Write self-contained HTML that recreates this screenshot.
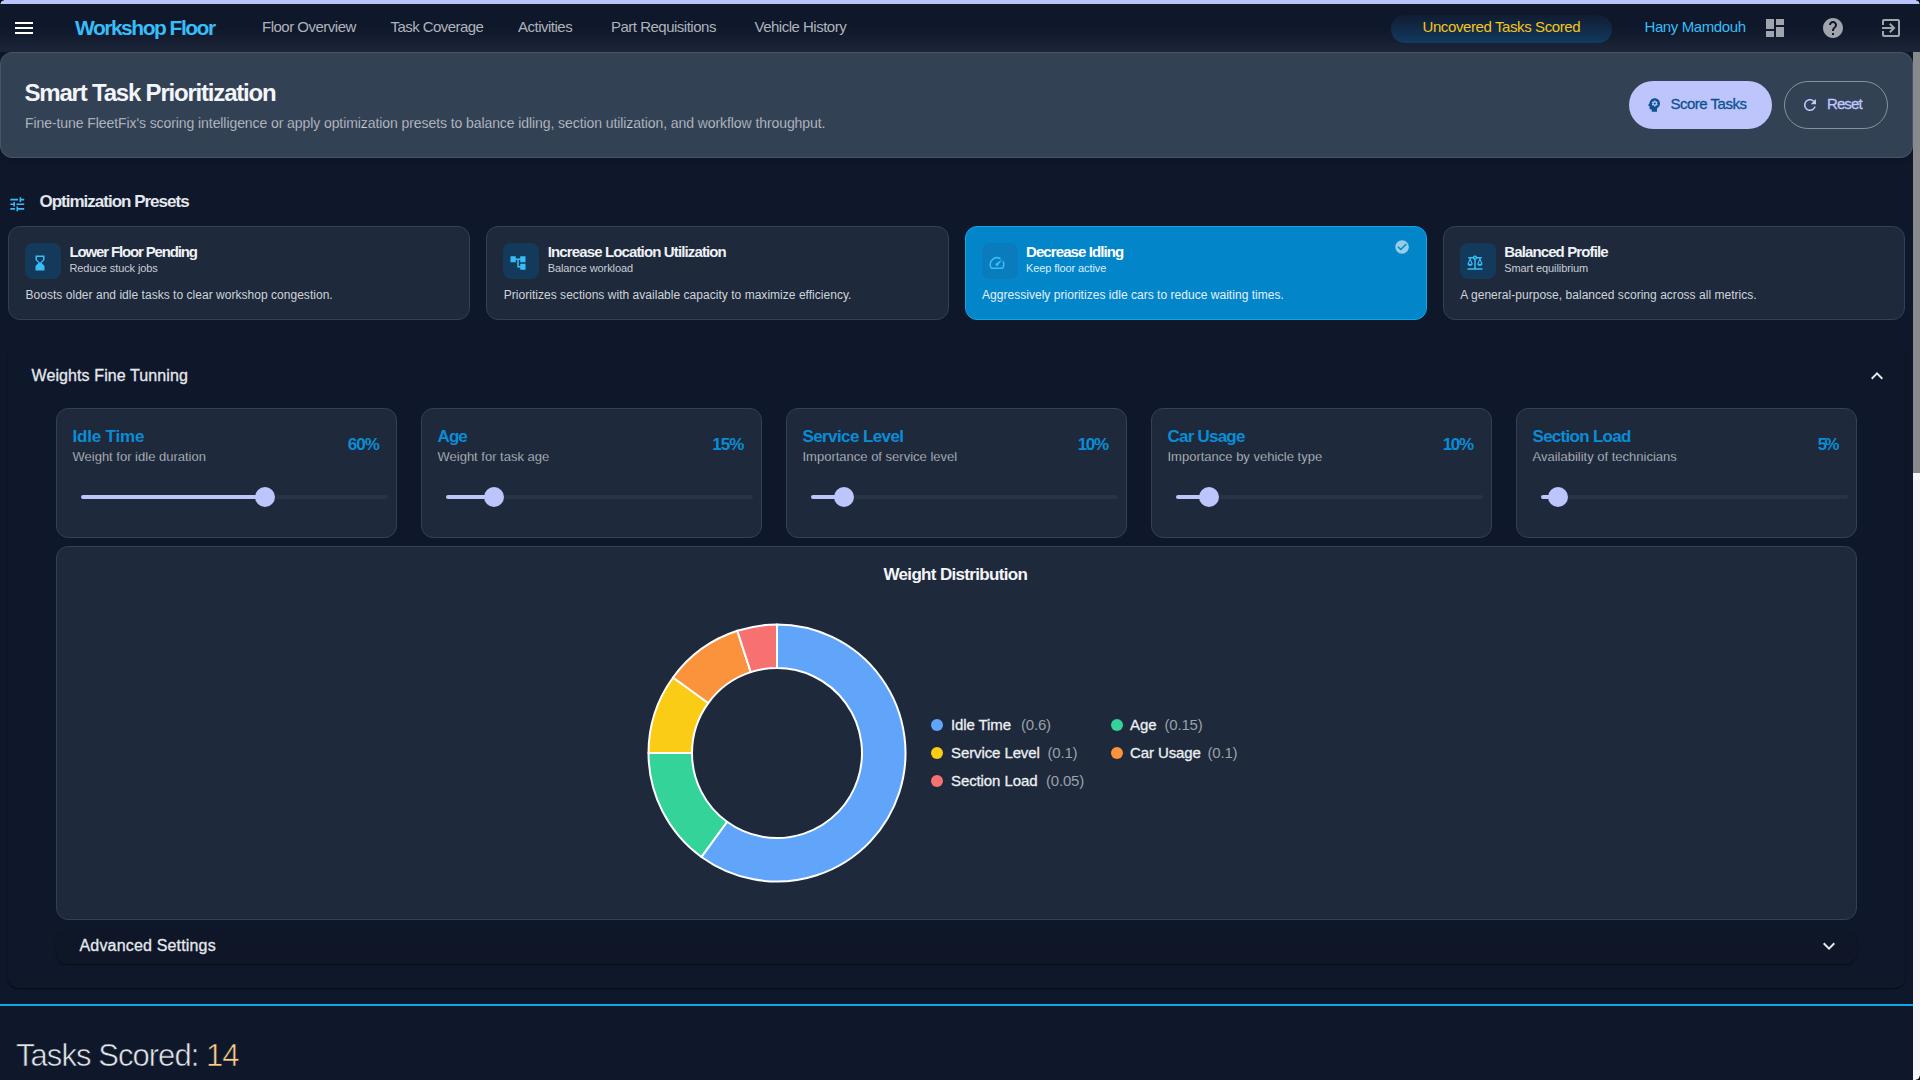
<!DOCTYPE html>
<html><head><meta charset="utf-8">
<style>
*{box-sizing:border-box;margin:0;padding:0}
html,body{width:1920px;height:1080px;overflow:hidden;background:#0f172a;font-family:"Liberation Sans",sans-serif}
.a{position:absolute}
.t{position:absolute;white-space:nowrap;line-height:1}
svg{display:block}
#topline{left:0;top:0;width:1920px;height:4px;background:#b9c3fc}
#nav{left:0;top:4px;width:1920px;height:48px;background:linear-gradient(180deg,#0f172a 0%,#0f172a 50%,#1c2638 100%)}
.navlink{font-size:15px;color:#aeb3bb;top:19px}
#pill{left:1391px;top:15px;width:221px;height:28px;border-radius:14px;background:linear-gradient(180deg,#111c31 0%,#123a60 100%)}
#sbtrack{left:1913px;top:52px;width:7px;height:1028px;background:#f6f6f8}
#sbthumb{left:1913px;top:52px;width:7px;height:421px;background:#88898d}
#header{left:0;top:52px;width:1913px;height:106px;border-radius:12px;background:#334155;border:1px solid #46556a;box-shadow:0 2px 4px rgba(0,0,0,0.18)}
.btn{border-radius:24px}
#prow{left:8px;top:226px;width:1897px;height:94px;display:flex;gap:16px}
.pcard{position:relative;flex:1 1 0;height:94px;border-radius:12px;background:#1e293b;border:1px solid #334155}
.pcard.act{background:#0385c9;border-color:#0ea5e9}
.ibox{left:16px;top:16px;width:36px;height:36px;border-radius:8px;background:#133a5a}
.act .ibox{background:#0a7bbd}
.ptitle{left:60.5px;font-size:15px;font-weight:bold;color:#eef1f5;top:17.3px;letter-spacing:-1.15px}
.psub{left:60.5px;font-size:11px;color:#c9ced6;top:36px;letter-spacing:-0.1px}
.pdesc{left:16.5px;font-size:12px;color:#cfd4db;top:61.6px;letter-spacing:0.03px}
.act .ptitle{color:#fff}
.act .psub{color:#dcefff}
.act .pdesc{color:#e3f2fd}
#wcont{left:8px;top:352px;width:1897px;height:636px;border-radius:6px 6px 10px 10px;background:#0f172a;box-shadow:0 2px 1px -1px rgba(0,0,0,0.3),0 1px 1px rgba(0,0,0,0.2),0 1px 3px rgba(0,0,0,0.18)}
.scard{top:408px;width:341px;height:130px;border-radius:12px;background:#1e293b;border:1px solid #334155}
.stitle{left:15.5px;top:18.6px;font-size:17px;font-weight:bold;color:#0a8dd6;letter-spacing:-0.2px}
.ssub{left:15.5px;top:41.2px;font-size:13px;color:#c8cdd4;-webkit-text-stroke:0.25px #1e293b}
.spct{right:16.5px;top:26.6px;font-size:17px;font-weight:bold;color:#0a8dd6;letter-spacing:-1px}
.rail{left:24px;top:86px;width:307px;height:4px;border-radius:2px;background:#283344}
.fill{left:24px;top:86px;height:4px;border-radius:2px;background:#bcc5fc}
.thumb{top:78px;width:20px;height:20px;border-radius:50%;background:#bcc5fc}
#wdist{left:56px;top:546px;width:1801px;height:374px;border-radius:12px;background:#1e293b;border:1px solid #334155}
.dot{width:12px;height:12px;border-radius:50%}
.lg{font-size:15px;color:#eceff3;letter-spacing:-0.1px;-webkit-text-stroke:0.3px #eceff3}
.lv{font-size:15px;color:#9aa1ab;letter-spacing:-0.2px}
#adv{left:56px;top:931px;width:1801px;height:33px;border-radius:12px;background:#0e1627;box-shadow:0 2px 1px -1px rgba(0,0,0,0.25),0 1px 1px rgba(0,0,0,0.14),0 1px 3px rgba(0,0,0,0.12)}
#blueline{left:0;top:1004px;width:1913px;height:2px;background:#0ea5e9}
</style></head>
<body>
<div id="topline" class="a"></div>
<div id="nav" class="a"></div>
<!-- menu icon -->
<svg class="a" style="left:12px;top:16px" width="24" height="24" viewBox="0 0 24 24"><path fill="#fff" d="M3 18h18v-2H3v2zm0-5h18v-2H3v2zm0-7v2h18V6H3z"/></svg>
<div class="t" style="left:75px;top:17px;font-size:21px;font-weight:bold;color:#38bdf8;letter-spacing:-1.5px">Workshop Floor</div>
<div class="t navlink" style="left:262px;letter-spacing:-0.5px">Floor Overview</div>
<div class="t navlink" style="left:390.5px;letter-spacing:-0.55px">Task Coverage</div>
<div class="t navlink" style="left:518px;letter-spacing:-0.5px">Activities</div>
<div class="t navlink" style="left:611px;letter-spacing:-0.5px">Part Requisitions</div>
<div class="t navlink" style="left:754.5px;letter-spacing:-0.5px">Vehicle History</div>
<div id="pill" class="a"></div>
<div class="t" style="left:1422.5px;top:19px;font-size:15px;color:#f5c518;letter-spacing:-0.4px">Uncovered Tasks Scored</div>
<div class="t" style="left:1644.5px;top:19px;font-size:15px;color:#38bdf8;letter-spacing:-0.4px">Hany Mamdouh</div>
<svg class="a" style="left:1763px;top:16px" width="24" height="24" viewBox="0 0 24 24"><path fill="#a0a4ac" d="M3 13h8V3H3v10zm0 8h8v-6H3v6zm10 0h8V11h-8v10zm0-18v6h8V3h-8z"/></svg>
<svg class="a" style="left:1821px;top:16px" width="24" height="24" viewBox="0 0 24 24"><path fill="#a0a4ac" d="M12 2C6.48 2 2 6.48 2 12s4.48 10 10 10 10-4.48 10-10S17.52 2 12 2zm1 17h-2v-2h2v2zm2.07-7.75-.9.92C13.45 12.9 13 13.5 13 15h-2v-.5c0-1.1.45-2.1 1.17-2.83l1.24-1.26c.37-.36.59-.86.59-1.41 0-1.1-.9-2-2-2s-2 .9-2 2H8c0-2.21 1.79-4 4-4s4 1.79 4 4c0 .88-.36 1.68-.93 2.25z"/></svg>
<svg class="a" style="left:1879px;top:16px" width="24" height="24" viewBox="0 0 24 24"><path fill="#a0a4ac" d="M10.09 15.59L11.5 17l5-5-5-5-1.41 1.41L12.67 11H3v2h9.67l-2.58 2.59zM19 3H5c-1.11 0-2 .9-2 2v4h2V5h14v14H5v-4H3v4c0 1.1.89 2 2 2h14c1.1 0 2-.9 2-2V5c0-1.1-.9-2-2-2z"/></svg>

<!-- header card -->
<div id="header" class="a"></div>
<div class="t" style="left:24.5px;top:81px;font-size:24px;font-weight:bold;color:#f3f5f8;letter-spacing:-1.2px">Smart Task Prioritization</div>
<div class="t" style="left:25px;top:116px;font-size:14px;color:#cdd1d8;letter-spacing:-0.08px;-webkit-text-stroke:0.25px #334155">Fine-tune FleetFix's scoring intelligence or apply optimization presets to balance idling, section utilization, and workflow throughput.</div>
<div class="a btn" style="left:1629px;top:81px;width:143px;height:48px;background:#bec5fc"></div>
<svg class="a" style="left:1645px;top:96px" width="18" height="18" viewBox="0 0 24 24"><path fill="#0c5291" d="M13 8.57c-.79 0-1.43.64-1.43 1.43s.64 1.43 1.43 1.43 1.43-.64 1.43-1.43-.64-1.43-1.43-1.43zM13 3C9.25 3 6.2 5.94 6.02 9.64L4.1 12.2c-.25.33-.01.8.4.8H6v3c0 1.1.9 2 2 2h1v3h7v-4.68c2.36-1.12 4-3.53 4-6.32 0-3.87-3.13-7-7-7zm3 7c0 .13-.01.26-.02.39l.83.66c.08.06.1.16.05.25l-.8 1.39c-.05.09-.16.12-.24.09l-.99-.4c-.21.16-.43.29-.67.39L14 13.83c-.01.1-.1.17-.2.17h-1.6c-.1 0-.18-.07-.2-.17l-.15-1.06c-.25-.1-.47-.23-.68-.39l-.99.4c-.09.03-.2 0-.25-.09l-.8-1.39c-.05-.08-.03-.19.05-.25l.84-.66c-.01-.13-.02-.26-.02-.39s.02-.27.04-.39l-.85-.66c-.08-.06-.1-.16-.05-.26l.8-1.38c.05-.09.15-.12.24-.09l1 .4c.2-.15.43-.29.67-.39L12 6.17c.02-.1.1-.17.2-.17h1.6c.1 0 .18.07.19.17l.15 1.06c.24.1.46.23.67.39l1-.4c.09-.03.2 0 .24.09l.8 1.38c.05.09.03.2-.05.26l-.85.66c.03.12.04.25.04.39z"/></svg>
<div class="t" style="left:1670.5px;top:96.3px;font-size:15px;color:#0c5291;letter-spacing:-0.5px;-webkit-text-stroke:0.3px #0c5291">Score Tasks</div>
<div class="a btn" style="left:1784px;top:81px;width:104px;height:48px;border:1px solid #8a9099"></div>
<svg class="a" style="left:1801px;top:96px" width="18" height="18" viewBox="0 0 24 24"><path fill="#c0c7fc" d="M17.65 6.35C16.2 4.9 14.21 4 12 4c-4.42 0-7.99 3.58-7.99 8s3.57 8 7.99 8c3.73 0 6.84-2.55 7.730-6h-2.08c-.82 2.33-3.04 4-5.65 4-3.31 0-6-2.69-6-6s2.69-6 6-6c1.66 0 3.14.69 4.22 1.78L13 11h7V4l-2.35 2.35z"/></svg>
<div class="t" style="left:1827px;top:96.3px;font-size:15px;color:#c0c7fc;letter-spacing:-0.9px;-webkit-text-stroke:0.3px #c0c7fc">Reset</div>

<!-- optimization presets -->
<svg class="a" style="left:7.6px;top:195px" width="18.5" height="18.5" viewBox="0 0 24 24"><path fill="#38bdf8" d="M3 17v2h6v-2H3zM3 5v2h10V5H3zm10 16v-2h8v-2h-8v-2h-2v6h2zM7 9v2H3v2h4v2h2V9H7zm14 4v-2H11v2h10zm-6-4h2V7h4V5h-4V3h-2v6z"/></svg>
<div class="t" style="left:39.5px;top:192.6px;font-size:17px;font-weight:bold;color:#e3e7ed;letter-spacing:-1px">Optimization Presets</div>

<div id="prow" class="a">
<div class="pcard">
  <div class="a ibox"></div>
  <svg class="a" style="left:22px;top:27px" width="18" height="18" viewBox="0 0 24 24"><path fill="#38bdf8" d="M18 22l-.01-6L14 12l3.99-4.01L18 2H6v6l4 4-4 3.99V22h12zM8 7.5V4h8v3.5l-4 4-4-4z"/></svg>
  <div class="t ptitle">Lower Floor Pending</div>
  <div class="t psub">Reduce stuck jobs</div>
  <div class="t pdesc">Boosts older and idle tasks to clear workshop congestion.</div>
</div>
<div class="pcard">
  <div class="a ibox"></div>
  <svg class="a" style="left:22px;top:27px" width="18" height="18" viewBox="0 0 24 24"><path fill="#38bdf8" d="M22 11V3h-7v3H9V3H2v8h7V8h2v10h4v3h7v-8h-7v3h-2V8h2v3z"/></svg>
  <div class="t ptitle" style="letter-spacing:-0.87px">Increase Location Utilization</div>
  <div class="t psub">Balance workload</div>
  <div class="t pdesc">Prioritizes sections with available capacity to maximize efficiency.</div>
</div>
<div class="pcard act">
  <div class="a ibox"></div>
  <svg class="a" style="left:22px;top:27px" width="18" height="18" viewBox="0 0 24 24"><path fill="#38bdf8" d="m20.38 8.57-1.23 1.85a8 8 0 0 1-.22 7.58H5.07A8 8 0 0 1 15.58 6.850l1.85-1.23A10 10 0 0 0 3.35 19a2 2 0 0 0 1.72 1h13.85a2 2 0 0 0 1.74-1 10 10 0 0 0-.27-10.44zm-9.79 6.84a2 2 0 0 0 2.83 0l5.66-8.49-8.49 5.66a2 2 0 0 0 0 2.830z"/></svg>
  <div class="t ptitle" style="letter-spacing:-0.91px">Decrease Idling</div>
  <div class="t psub">Keep floor active</div>
  <div class="t pdesc">Aggressively prioritizes idle cars to reduce waiting times.</div>
  <svg class="a" style="left:428.2px;top:11.8px" width="16.2" height="16.2" viewBox="0 0 24 24"><path fill="rgba(255,255,255,0.58)" d="M12 2C6.48 2 2 6.48 2 12s4.48 10 10 10 10-4.48 10-10S17.52 2 12 2zm-2 15-5-5 1.41-1.41L10 14.17l7.59-7.59L19 8l-9 9z"/></svg>
</div>
<div class="pcard">
  <div class="a ibox"></div>
  <svg class="a" style="left:22px;top:27px" width="18" height="18" viewBox="0 0 24 24"><path fill="#38bdf8" d="M13 7.83c.85-.3 1.53-.98 1.83-1.83H18l-3 7c0 1.66 1.57 3 3.5 3s3.5-1.34 3.5-3l-3-7h2V4h-6.17c-.41-1.17-1.52-2-2.83-2s-2.42.83-2.830 2H3v2h2l-3 7c0 1.66 1.57 3 3.5 3S9 14.66 9 13L6 6h3.17c.3.85.98 1.53 1.83 1.83V19H2v2h20v-2h-9V7.83zM20.37 13h-3.74l1.87-4.36L20.37 13zm-13 0H3.63L5.5 8.64 7.37 13zM12 6c-.55 0-1-.45-1-1s.45-1 1-1 1 .45 1 1-.45 1-1 1z"/></svg>
  <div class="t ptitle" style="letter-spacing:-0.88px">Balanced Profile</div>
  <div class="t psub">Smart equilibrium</div>
  <div class="t pdesc">A general-purpose, balanced scoring across all metrics.</div>
</div>
</div>

<!-- weights container -->
<div id="wcont" class="a"></div>
<div class="t" style="left:31.5px;top:367.8px;font-size:16px;color:#e5e8ee;letter-spacing:0.1px;-webkit-text-stroke:0.3px #e5e8ee">Weights Fine Tunning</div>
<svg class="a" style="left:1865px;top:364px" width="24" height="24" viewBox="0 0 24 24"><path fill="#e5e8ee" d="M12 8l-6 6 1.41 1.41L12 10.83l4.59 4.58L18 14z"/></svg>

<div class="a scard" style="left:56px">
  <div class="t stitle" style="letter-spacing:-0.18px">Idle Time</div>
  <div class="t ssub">Weight for idle duration</div>
  <div class="t spct" style="right:17.25px">60%</div>
  <div class="a rail"></div><div class="a fill" style="width:184px"></div><div class="a thumb" style="left:198px"></div>
</div>
<div class="a scard" style="left:421px">
  <div class="t stitle" style="letter-spacing:-0.9px">Age</div>
  <div class="t ssub">Weight for task age</div>
  <div class="t spct" style="letter-spacing:-0.95px;right:17.5px">15%</div>
  <div class="a rail"></div><div class="a fill" style="width:46px"></div><div class="a thumb" style="left:62px"></div>
</div>
<div class="a scard" style="left:786px">
  <div class="t stitle" style="letter-spacing:-0.6px">Service Level</div>
  <div class="t ssub">Importance of service level</div>
  <div class="t spct" style="letter-spacing:-1.3px;right:18.25px">10%</div>
  <div class="a rail"></div><div class="a fill" style="width:31px"></div><div class="a thumb" style="left:47px"></div>
</div>
<div class="a scard" style="left:1151px">
  <div class="t stitle" style="letter-spacing:-0.77px">Car Usage</div>
  <div class="t ssub">Importance by vehicle type</div>
  <div class="t spct" style="letter-spacing:-1.3px;right:18.25px">10%</div>
  <div class="a rail"></div><div class="a fill" style="width:31px"></div><div class="a thumb" style="left:47px"></div>
</div>
<div class="a scard" style="left:1516px">
  <div class="t stitle" style="letter-spacing:-0.71px">Section Load</div>
  <div class="t ssub">Availability of technicians</div>
  <div class="t spct" style="letter-spacing:-2px;font-size:16.5px;right:18.5px">5%</div>
  <div class="a rail"></div><div class="a fill" style="width:15px"></div><div class="a thumb" style="left:31px"></div>
</div>

<div id="wdist" class="a"></div>
<div class="t" style="left:883.5px;top:565.6px;font-size:17px;font-weight:bold;color:#f3f5f8;letter-spacing:-0.67px">Weight Distribution</div>
<svg class="a" style="left:647px;top:623px" width="260" height="260" viewBox="0 0 260 260">
<g stroke="#fff" stroke-width="2" stroke-linejoin="round">
<path d="M130.00 1.50A128.5 128.5 0 1 1 54.47 233.96L80.04 198.77A85.0 85.0 0 1 0 130.00 45.00Z" fill="#60a5fa"/>
<path d="M54.47 233.96A128.5 128.5 0 0 1 1.50 130.00L45.00 130.00A85.0 85.0 0 0 0 80.04 198.77Z" fill="#34d399"/>
<path d="M1.50 130.00A128.5 128.5 0 0 1 26.04 54.47L61.23 80.04A85.0 85.0 0 0 0 45.00 130.00Z" fill="#facc15"/>
<path d="M26.04 54.47A128.5 128.5 0 0 1 90.29 7.79L103.73 49.16A85.0 85.0 0 0 0 61.23 80.04Z" fill="#fb923c"/>
<path d="M90.29 7.79A128.5 128.5 0 0 1 130.00 1.50L130.00 45.00A85.0 85.0 0 0 0 103.73 49.16Z" fill="#f87171"/>
</g></svg>
<div class="a dot" style="left:931px;top:719px;background:#60a5fa"></div>
<div class="t lg" style="left:951px;top:717.4px">Idle Time</div>
<div class="t lv" style="left:1021px;top:717.4px">(0.6)</div>
<div class="a dot" style="left:931px;top:747px;background:#facc15"></div>
<div class="t lg" style="left:951px;top:745.4px">Service Level</div>
<div class="t lv" style="left:1047.5px;top:745.4px">(0.1)</div>
<div class="a dot" style="left:931px;top:775px;background:#f87171"></div>
<div class="t lg" style="left:951px;top:773.4px">Section Load</div>
<div class="t lv" style="left:1046px;top:773.4px">(0.05)</div>
<div class="a dot" style="left:1111px;top:719px;background:#34d399"></div>
<div class="t lg" style="left:1130px;top:717.4px">Age</div>
<div class="t lv" style="left:1164.5px;top:717.4px">(0.15)</div>
<div class="a dot" style="left:1111px;top:747px;background:#fb923c"></div>
<div class="t lg" style="left:1130px;top:745.4px">Car Usage</div>
<div class="t lv" style="left:1207.5px;top:745.4px">(0.1)</div>

<div id="adv" class="a"></div>
<div class="t" style="left:79.5px;top:937.8px;font-size:16px;color:#e5e8ee;letter-spacing:0.17px;-webkit-text-stroke:0.3px #e5e8ee">Advanced Settings</div>
<svg class="a" style="left:1817px;top:934px" width="24" height="24" viewBox="0 0 24 24"><path fill="#e5e8ee" d="M16.59 8.59L12 13.17 7.41 8.59 6 10l6 6 6-6z"/></svg>

<div id="blueline" class="a"></div>
<div class="t" style="left:16px;top:1039.6px;font-size:31px;color:#e3e6eb;letter-spacing:-0.95px;-webkit-text-stroke:0.6px #0f172a">Tasks Scored: <span style="color:#fccf88">14</span></div>

<div id="sbtrack" class="a"></div>
<div id="sbthumb" class="a"></div>

<div class="a" style="left:0;top:0;width:4px;height:4px;background:radial-gradient(circle at 100% 100%,transparent 3px,#000 4px)"></div>
<div class="a" style="left:1916px;top:0;width:4px;height:4px;background:radial-gradient(circle at 0% 100%,transparent 3px,#000 4px)"></div>
<div class="a" style="left:1916px;top:1076px;width:4px;height:4px;background:radial-gradient(circle at 0% 0%,transparent 3px,#000 4px)"></div>
</body></html>
